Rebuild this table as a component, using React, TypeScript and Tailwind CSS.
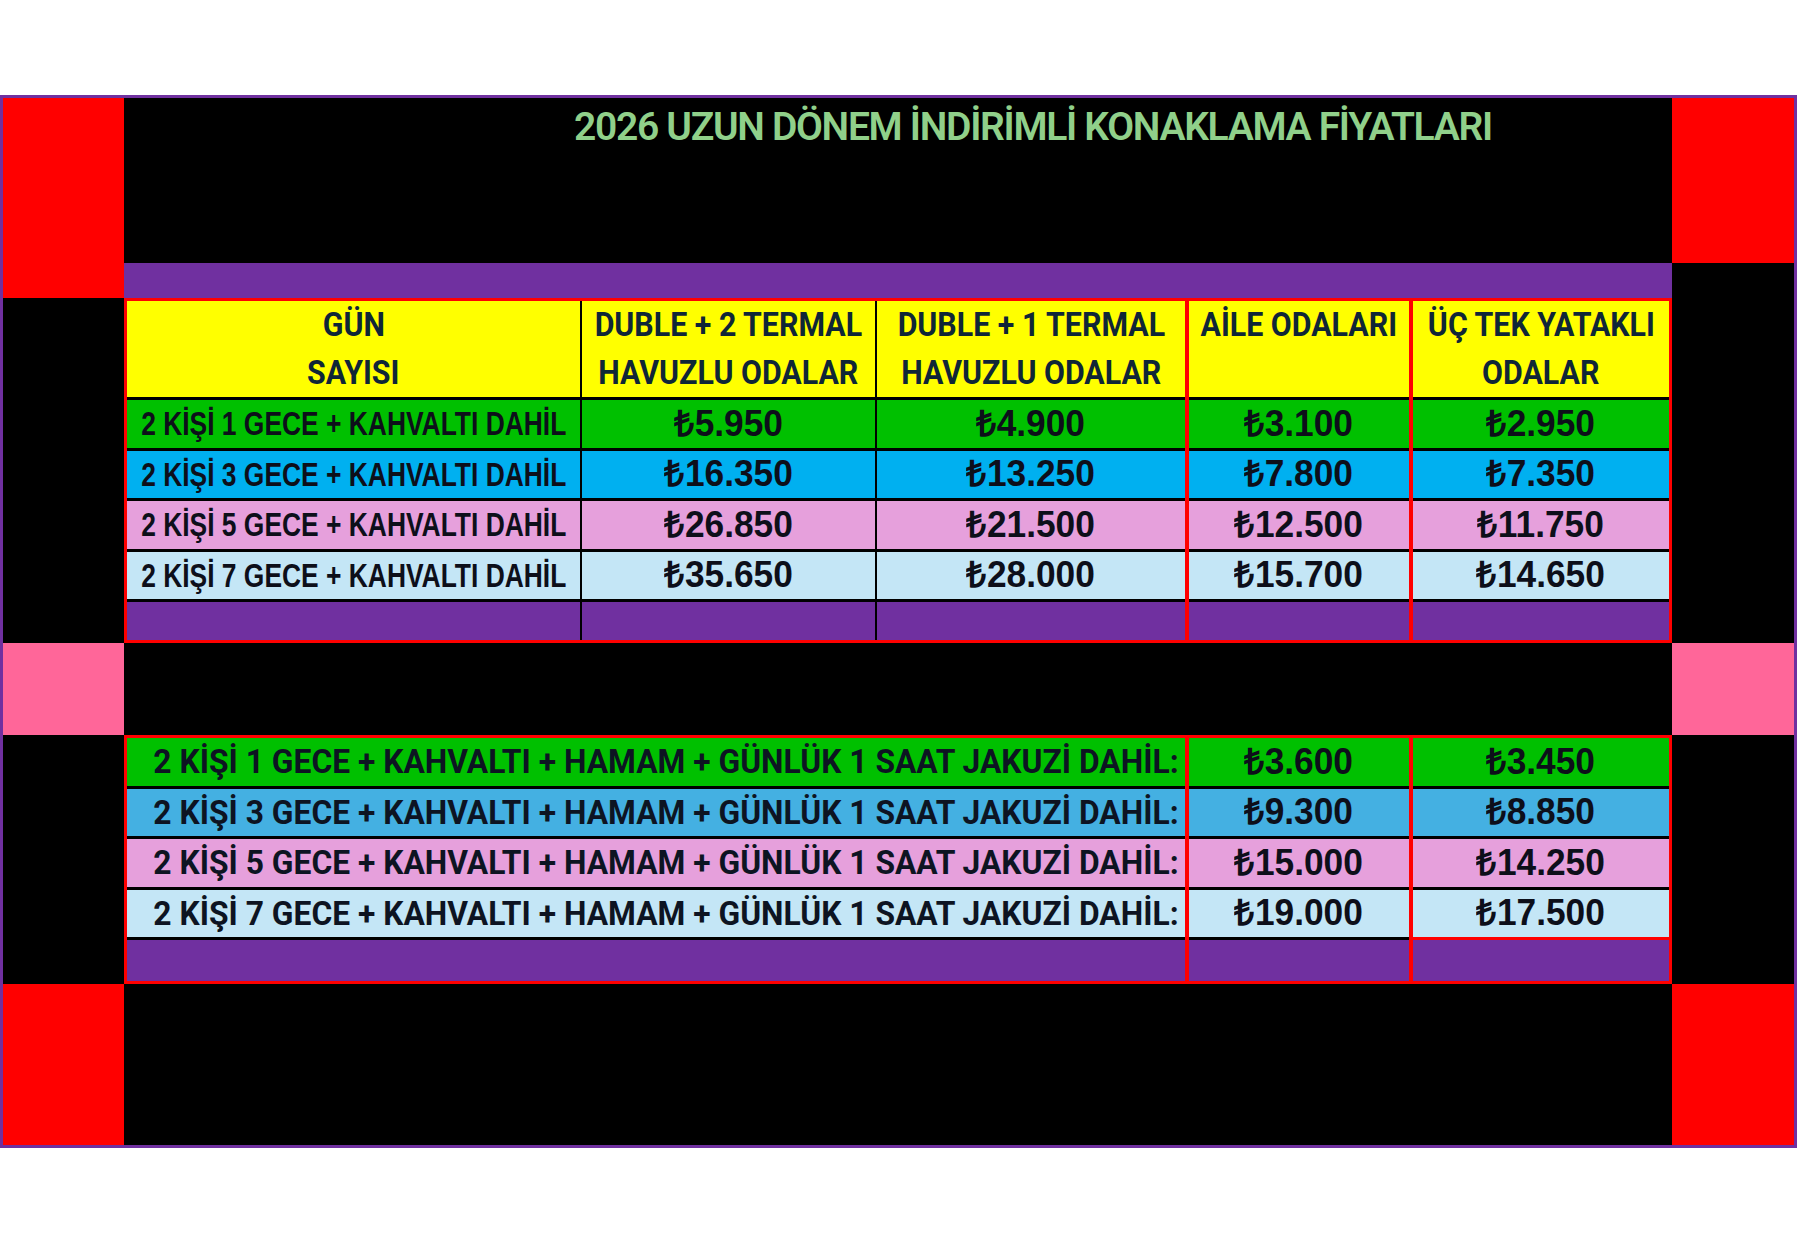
import React from "react";

type Cell = { bg: string; text: string; border?: string };

const ARIAL = "font-['Liberation_Sans','Arial',sans-serif] font-bold";
const DIN = "font-['Roboto','Noto_Sans',sans-serif] font-bold";

const C1 = ["bg-[#00c000]", "bg-[#00b0f0]", "bg-[#e6a0dc]", "bg-[#c4e6f6]"];
const C2 = ["bg-[#00c000]", "bg-[#44b0e2]", "bg-[#e6a0dc]", "bg-[#c4e6f6]"];

function Column({
  width,
  header,
  cells,
  textClass,
  spanClass,
  align = "justify-center",
}: {
  width: string;
  header?: React.ReactNode;
  cells: Cell[];
  textClass: string;
  spanClass: string;
  align?: string;
}) {
  return (
    <div className={`${width} flex flex-col h-full`}>
      {header !== undefined && (
        <div className={`h-[99px] shrink-0 border-b-[3px] border-black bg-[#ffff00] flex flex-col items-center justify-center text-[33px] leading-[48px] text-[#0f2637] ${DIN} whitespace-nowrap`}>
          {header}
        </div>
      )}
      {cells.map((c, i) => (
        <div
          key={i}
          className={`h-[50.5px] shrink-0 border-b-[3px] ${c.border ?? "border-black"} ${c.bg} flex items-center ${align} whitespace-nowrap ${textClass}`}
        >
          <span className={`inline-block ${spanClass}`}>{c.text}</span>
        </div>
      ))}
      <div className="flex-1 bg-[#7030a0]" />
    </div>
  );
}

function H({ children }: { children: React.ReactNode }) {
  return <span className="inline-block scale-x-[0.92]">{children}</span>;
}

function VLine({ cls }: { cls: string }) {
  return <div className={`${cls} h-full shrink-0`} />;
}

export default function App() {
  const t1Labels = [
    "2 KİŞİ 1 GECE + KAHVALTI DAHİL",
    "2 KİŞİ 3 GECE + KAHVALTI DAHİL",
    "2 KİŞİ 5 GECE + KAHVALTI DAHİL",
    "2 KİŞİ 7 GECE + KAHVALTI DAHİL",
  ];
  const t1Prices = [
    ["₺5.950", "₺16.350", "₺26.850", "₺35.650"],
    ["₺4.900", "₺13.250", "₺21.500", "₺28.000"],
    ["₺3.100", "₺7.800", "₺12.500", "₺15.700"],
    ["₺2.950", "₺7.350", "₺11.750", "₺14.650"],
  ];
  const t2Labels = [
    "2 KİŞİ 1 GECE + KAHVALTI + HAMAM + GÜNLÜK 1 SAAT JAKUZİ DAHİL:",
    "2 KİŞİ 3 GECE + KAHVALTI + HAMAM + GÜNLÜK 1 SAAT JAKUZİ DAHİL:",
    "2 KİŞİ 5 GECE + KAHVALTI + HAMAM + GÜNLÜK 1 SAAT JAKUZİ DAHİL:",
    "2 KİŞİ 7 GECE + KAHVALTI + HAMAM + GÜNLÜK 1 SAAT JAKUZİ DAHİL:",
  ];
  const t2Prices = [
    ["₺3.600", "₺9.300", "₺15.000", "₺19.000"],
    ["₺3.450", "₺8.850", "₺14.250", "₺17.500"],
  ];

  const priceText = `${ARIAL} text-[36px] text-[#0d0f1a]`;
  const priceSpan = "scale-x-[0.98]";

  return (
    <div className="w-[1800px] h-[1246px] bg-white pt-[95px]">
      <div className="w-[1797px] h-[1053px] border-[3px] border-[#7030a0] grid grid-cols-[121px_1548px_122px] grid-rows-[165px_35px_345px_92px_249px_161px]">
        {/* left column */}
        <div className="col-start-1 row-start-1 row-span-2 bg-[#ff0000]" />
        <div className="col-start-1 row-start-3 bg-black" />
        <div className="col-start-1 row-start-4 bg-[#ff6699]" />
        <div className="col-start-1 row-start-5 bg-black" />
        <div className="col-start-1 row-start-6 bg-[#ff0000]" />

        {/* right column */}
        <div className="col-start-3 row-start-1 bg-[#ff0000]" />
        <div className="col-start-3 row-start-2 row-span-2 bg-black" />
        <div className="col-start-3 row-start-4 bg-[#ff6699]" />
        <div className="col-start-3 row-start-5 bg-black" />
        <div className="col-start-3 row-start-6 bg-[#ff0000]" />

        {/* title */}
        <div className="col-start-2 row-start-1 bg-black pl-[450px] pt-[6px]">
          <div className="font-['Roboto','Noto_Sans',sans-serif] font-semibold text-[39px] leading-[46px] tracking-[-1.3px] text-[#90d08a] whitespace-nowrap">
            2026 UZUN DÖNEM İNDİRİMLİ KONAKLAMA FİYATLARI
          </div>
        </div>
        <div className="col-start-2 row-start-2 bg-[#7030a0]" />

        {/* table 1 */}
        <div className="col-start-2 row-start-3 border-[3px] border-[#ff0000] flex">
          <Column
            width="w-[453px]"
            header={<><H>GÜN</H><H>SAYISI</H></>}
            cells={t1Labels.map((t, i) => ({ bg: C1[i], text: t }))}
            textClass={`${ARIAL} text-[33px] text-[#0d0f1a]`}
            spanClass="scale-x-[0.8]"
          />
          <VLine cls="w-[2px] bg-black" />
          <Column
            width="w-[293px]"
            header={<><H>DUBLE + 2 TERMAL</H><H>HAVUZLU ODALAR</H></>}
            cells={t1Prices[0].map((t, i) => ({ bg: C1[i], text: t }))}
            textClass={priceText}
            spanClass={priceSpan}
          />
          <VLine cls="w-[2px] bg-black" />
          <Column
            width="w-[308px]"
            header={<><H>DUBLE + 1 TERMAL</H><H>HAVUZLU ODALAR</H></>}
            cells={t1Prices[1].map((t, i) => ({ bg: C1[i], text: t }))}
            textClass={priceText}
            spanClass={priceSpan}
          />
          <VLine cls="w-[4px] bg-[#ff0000]" />
          <Column
            width="w-[220px]"
            header={<><H>AİLE ODALARI</H><span>&nbsp;</span></>}
            cells={t1Prices[2].map((t, i) => ({ bg: C1[i], text: t }))}
            textClass={priceText}
            spanClass={priceSpan}
          />
          <VLine cls="w-[4px] bg-[#ff0000]" />
          <Column
            width="w-[256px]"
            header={<><H>ÜÇ TEK YATAKLI</H><H>ODALAR</H></>}
            cells={t1Prices[3].map((t, i) => ({ bg: C1[i], text: t }))}
            textClass={priceText}
            spanClass={priceSpan}
          />
        </div>

        <div className="col-start-2 row-start-4 bg-black" />

        {/* table 2 */}
        <div className="col-start-2 row-start-5 border-[3px] border-[#ff0000] flex">
          <Column
            width="w-[1058px]"
            cells={t2Labels.map((t, i) => ({ bg: C2[i], text: t }))}
            textClass={`${DIN} text-[34px] text-[#0d1422] pr-[6px]`}
            spanClass="scale-x-[0.935] origin-right"
            align="justify-end"
          />
          <VLine cls="w-[4px] bg-[#ff0000]" />
          <Column
            width="w-[220px]"
            cells={t2Prices[0].map((t, i) => ({ bg: C2[i], text: t }))}
            textClass={priceText}
            spanClass={priceSpan}
          />
          <VLine cls="w-[4px] bg-[#ff0000]" />
          <Column
            width="w-[256px]"
            cells={t2Prices[1].map((t, i) => ({
              bg: C2[i],
              text: t,
              border: i === 3 ? "border-[#ff0000]" : "border-black",
            }))}
            textClass={priceText}
            spanClass={priceSpan}
          />
        </div>

        <div className="col-start-2 row-start-6 bg-black" />
      </div>
    </div>
  );
}
